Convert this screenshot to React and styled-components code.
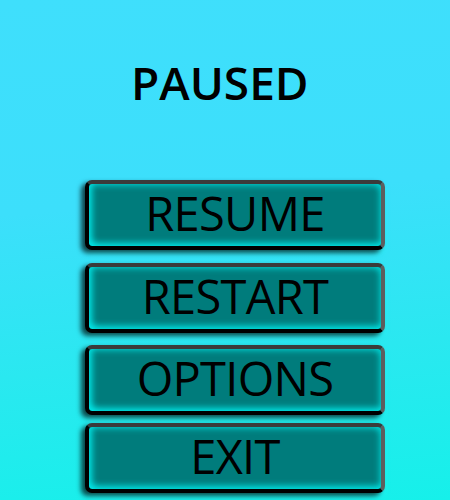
import React from "react";
import styled, { createGlobalStyle } from "styled-components";

const Global = createGlobalStyle`
  html, body { margin: 0; padding: 0; }
  body {
    width: 450px;
    height: 500px;
    overflow: hidden;
    background: linear-gradient(175deg, #3fdffc 0%, #3cdffb 40%, #2ae8f0 70%, #16f0ea 100%);
    font-family: "Open Sans", "Noto Sans", sans-serif;
  }
`;

const Screen = styled.div`
  display: flex;
  flex-direction: column;
  width: 450px;
  height: 500px;
  padding: 59px 0 0 85px;
  box-sizing: border-box;
`;

const Title = styled.h1`
  margin: 0 0 0 46px;
  font-size: 46px;
  line-height: 46px;
  font-weight: 600;
  color: #000;
  height: 121px;
`;

const Menu = styled.div`
  display: flex;
  flex-direction: column;
  width: 300px;
`;

const MenuButton = styled.button`
  display: flex;
  align-items: center;
  justify-content: center;
  box-sizing: border-box;
  width: 300px;
  height: 70px;
  margin: ${(p) => p.$gap}px 0 0 0;
  padding: 0 0 4px 0;
  border: 4px solid;
  border-color: #3b3b3b #5e5e5e #000 #000;
  border-radius: 7px;
  background: #007c7c;
  box-shadow:
    -4px 3px 5px rgba(0, 0, 0, 0.7),
    0 4px 5px rgba(40, 255, 255, 0.55),
    inset 5px -5px 6px -2px #00e6e6,
    inset -4px 4px 6px -3px #00d8d8;
  font-family: "Open Sans", "Noto Sans", sans-serif;
  font-size: 47px;
  font-weight: 400;
  color: #000;
  letter-spacing: -0.7px;
  cursor: pointer;
`;

const items = [
  { label: "RESUME", gap: 0 },
  { label: "RESTART", gap: 13 },
  { label: "OPTIONS", gap: 12 },
  { label: "EXIT", gap: 8 },
];

export default function App() {
  return (
    <>
      <Global />
      <Screen>
        <Title>PAUSED</Title>
        <Menu>
          {items.map((it) => (
            <MenuButton key={it.label} $gap={it.gap}>
              {it.label}
            </MenuButton>
          ))}
        </Menu>
      </Screen>
    </>
  );
}
